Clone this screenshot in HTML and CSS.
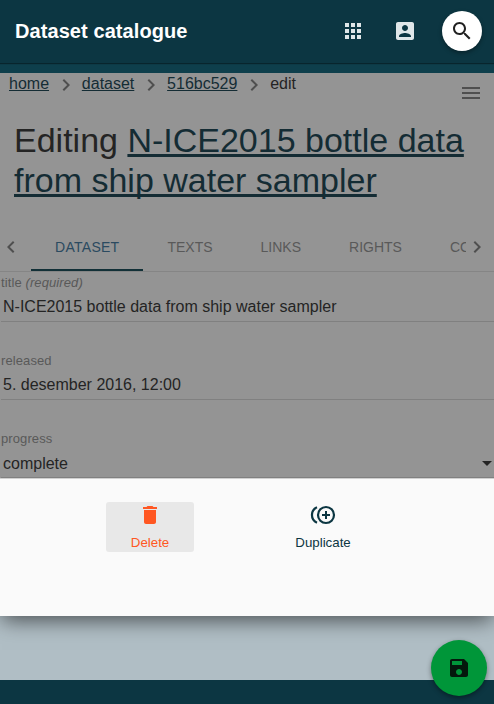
FILE: index.html
```html
<!DOCTYPE html>
<html lang="en">
<head>
<meta charset="utf-8">
<title>Dataset catalogue</title>
<link rel="stylesheet" href="styles.css">
</head>
<body>
<header class="topbar">
  <div class="brand">Dataset catalogue</div>
  <svg class="icon apps" viewBox="0 0 24 24"><path d="M4 8h4V4H4v4zm6 12h4v-4h-4v4zm-6 0h4v-4H4v4zm0-6h4v-4H4v4zm6 0h4v-4h-4v4zm6-10v4h4V4h-4zm-6 4h4V4h-4v4zm6 6h4v-4h-4v4zm0 6h4v-4h-4v4z"/></svg>
  <svg class="icon account" viewBox="0 0 24 24"><path d="M3 5v14c0 1.1.89 2 2 2h14c1.1 0 2-.9 2-2V5c0-1.1-.9-2-2-2H5c-1.11 0-2 .9-2 2zm12 4c0 1.66-1.34 3-3 3s-3-1.34-3-3 1.34-3 3-3 3 1.34 3 3zm-9 8c0-2 4-3.1 6-3.1s6 1.1 6 3.1v1H6v-1z"/></svg>
  <div class="search"><svg class="icon" viewBox="0 0 24 24"><path d="M15.5 14h-.79l-.28-.27C15.41 12.59 16 11.11 16 9.5 16 5.91 13.09 3 9.5 3S3 5.91 3 9.5 5.91 16 9.5 16c1.61 0 3.09-.59 4.23-1.57l.27.28v.79l5 4.99L20.49 19l-4.99-5zm-6 0C7.01 14 5 11.99 5 9.5S7.01 5 9.5 5 14 7.01 14 9.5 11.99 14 9.5 14z"/></svg></div>
</header>
<div class="band"></div>
<main class="page">
  <nav class="crumbs">
    <a>home</a>
    <svg class="chev" viewBox="0 0 24 24"><path d="M8.59 16.59L10 18l6-6-6-6-1.41 1.41L13.17 12z"/></svg>
    <a>dataset</a>
    <svg class="chev" viewBox="0 0 24 24"><path d="M8.59 16.59L10 18l6-6-6-6-1.41 1.41L13.17 12z"/></svg>
    <a>516bc529</a>
    <svg class="chev" viewBox="0 0 24 24"><path d="M8.59 16.59L10 18l6-6-6-6-1.41 1.41L13.17 12z"/></svg>
    <span>edit</span>
    <svg class="menu" viewBox="0 0 24 24"><path d="M3 18h18v-2H3v2zm0-5h18v-2H3v2zm0-7v2h18V6H3z"/></svg>
  </nav>
  <h1>Editing <a>N-ICE2015 bottle data from ship water sampler</a></h1>
  <div class="tabs">
    <svg class="chev prev" viewBox="0 0 24 24"><path d="M15.41 7.41L14 6l-6 6 6 6 1.41-1.41L10.83 12z"/></svg>
    <div class="strip">
      <div class="tab active">DATASET</div>
      <div class="tab">TEXTS</div>
      <div class="tab">LINKS</div>
      <div class="tab">RIGHTS</div>
      <div class="tab">COVERAGE</div>
    </div>
    <svg class="chev next" viewBox="0 0 24 24"><path d="M8.59 16.59L10 18l6-6-6-6-1.41 1.41L13.17 12z"/></svg>
  </div>
  <div class="field"><label>title <em>(required)</em></label><div class="value">N-ICE2015 bottle data from ship water sampler</div></div>
  <div class="field"><label>released</label><div class="value">5. desember 2016, 12:00</div></div>
  <div class="field last"><label>progress</label><div class="value select">complete<svg class="caret" viewBox="0 0 10 5"><path d="M0 0h10L5 5z"/></svg></div></div>
</main>
<section class="sheet">
  <div class="action delete">
    <svg class="icon" viewBox="0 0 24 24"><path d="M6 19c0 1.1.9 2 2 2h8c1.1 0 2-.9 2-2V7H6v12zM19 4h-3.5l-1-1h-5l-1 1H5v2h14V4z"/></svg>
    <span>Delete</span>
  </div>
  <div class="action duplicate">
    <svg class="dup" viewBox="0 0 26 24"><path d="M17 11h-2v3h-3v2h3v3h2v-3h3v-2h-3z" transform="translate(0 -3)"/><circle cx="16" cy="12" r="8"/><path class="arc" d="M7 4.3A8.4 8.4 0 0 0 7 19.7"/></svg>
    <span>Duplicate</span>
  </div>
</section>
<div class="below"></div>
<footer class="footer"></footer>
<button class="fab" aria-label="Save"><svg class="icon" viewBox="0 0 24 24"><path d="M17 3H5c-1.11 0-2 .9-2 2v14c0 1.1.89 2 2 2h14c1.1 0 2-.9 2-2V7l-4-4zm-5 16c-1.66 0-3-1.34-3-3s1.34-3 3-3 3 1.34 3 3-1.34 3-3 3zm3-10H5V5h10v4z"/></svg></button>
</body>
</html>
```
FILE: styles.css
```css
* { box-sizing: border-box; }
body {
  margin: 0;
  height: 704px;
  overflow: hidden;
  position: relative;
  display: flex;
  flex-direction: column;
  font-family: "Liberation Sans", Arial, sans-serif;
  font-size: 16px;
  background: #0c3642;
}
svg { display: block; flex: none; }
.icon { width: 24px; height: 24px; fill: currentColor; }
.topbar {
  flex: none;
  height: 63px;
  display: flex;
  align-items: center;
  padding: 0 12px 1px 15px;
  background: #0c3642;
  color: #dfe6e8;
  box-shadow: 0 1px 1px rgba(0, 0, 0, .4);
  z-index: 1;
}
.brand { flex: 1; font-size: 20px; font-weight: bold; letter-spacing: .08px; color: #fff; }
.apps { margin-right: 28px; }
.account { margin-right: 25px; }
.search {
  width: 40px;
  height: 40px;
  border-radius: 50%;
  background: #fff;
  color: #212121;
  display: grid;
  place-items: center;
  box-shadow: 0 2px 4px rgba(0, 0, 0, .35);
}
.band { flex: none; height: 10px; background: #0e3f4c; }
.page {
  flex: none;
  height: 406px;
  overflow: hidden;
  background: #949494;
  color: #242424;
  border-bottom: 1px solid #d0d0d0;
}
.crumbs { height: 40px; display: flex; padding: 1px 11px 0 9px; line-height: 20px; }
.crumbs a, h1 a { color: #142c34; text-decoration: underline; text-decoration-skip-ink: none; }
.chev { width: 24px; height: 24px; fill: #4f4f4f; }
.crumbs .chev { margin: -1px 4.3px 0 4.5px; }
.menu { width: 24px; height: 24px; fill: #4f4f4f; margin: 7px 0 0 auto; }
h1 { margin: 7px 14px 0; font-size: 34px; font-weight: normal; line-height: 40px; }
.tabs { height: 49px; margin-top: 23px; display: flex; align-items: center; border-bottom: 1px solid #858585; }
.prev { margin-left: -1px; }
.strip { flex: 1; display: flex; margin-left: 8px; overflow: hidden; height: 48px; }
.tab { flex: none; padding: 0 24px; line-height: 48px; font-size: 14px; color: #595959; }
.active { letter-spacing: .28px; color: #2b4a60; border-bottom: 2px solid #123037; }
.next { margin: 0 5px 0 -1px; }
.field { height: 78px; padding: 3px 0 0 1px; }
.field label { display: block; font-size: 13px; letter-spacing: .1px; line-height: 16px; color: #595959; }
.value { height: 31px; padding-left: 2px; line-height: 32px; border-bottom: 1px solid #808080; }
.select { display: flex; justify-content: space-between; line-height: 33px; }
.caret { width: 10px; height: 5px; margin: 14px 2px 0 0; fill: #242424; }
.sheet {
  flex: none;
  height: 137px;
  padding: 23px 0 0 106px;
  display: flex;
  gap: 85px;
  background: #fafafa;
  box-shadow: 0 6px 20px -2px rgba(0, 0, 0, .6);
  clip-path: inset(0 0 -40px);
  z-index: 1;
}
.action {
  width: 88px;
  height: 50px;
  border-radius: 3px;
  display: flex;
  flex-direction: column;
  align-items: center;
  padding-top: 1px;
  font-size: 13.3px;
  line-height: 15px;
}
.action span { margin-top: 8px; }
.delete { background: #e8e8e8; color: #ff5722; }
.duplicate { color: #0c3642; }
.dup { width: 26px; height: 24px; fill: currentColor; }
.dup circle, .dup .arc { fill: none; stroke: currentColor; stroke-width: 2.2; }
.below { flex: none; height: 64px; background: #b0bec5; }
.footer { flex: 1; background: #0c3642; }
.fab {
  position: absolute;
  right: 7px;
  bottom: 8px;
  width: 56px;
  height: 56px;
  padding: 0;
  border: 0;
  border-radius: 50%;
  background: #009639;
  color: #04190c;
  display: grid;
  place-items: center;
  box-shadow: 0 2px 5px rgba(0, 0, 0, .4);
  z-index: 2;
}
```
